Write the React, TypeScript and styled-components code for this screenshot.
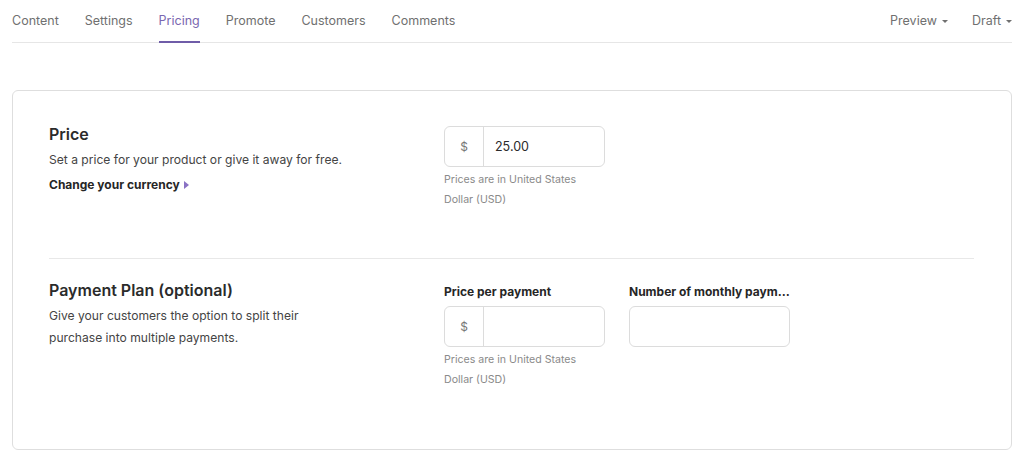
import React from "react"
import styled, { createGlobalStyle } from "styled-components"

const GlobalStyle = createGlobalStyle`
  html, body {
    margin: 0;
    padding: 0;
    background: #fff;
  }
  body {
    font-family: Inter, "Noto Sans", sans-serif;
    color: #2b2b2b;
    -webkit-font-smoothing: antialiased;
  }
  * {
    box-sizing: border-box;
  }
`

const Page = styled.div`
  padding: 0 12px;
`

const Nav = styled.nav`
  display: flex;
  align-items: flex-end;
  height: 43px;
  border-bottom: 1px solid #e6e6e6;
`

const Tabs = styled.div`
  display: flex;
  gap: 26px;
`

interface TabProps {
  $active?: boolean
}

const Tab = styled.a<TabProps>`
  display: flex;
  align-items: center;
  height: 42px;
  padding-bottom: 2px;
  margin-bottom: -1px;
  font-size: 12.5px;
  color: ${({ $active }) => ($active ? "#7a67b0" : "#707070")};
  border-bottom: 2px solid ${({ $active }) => ($active ? "#6f5ca8" : "transparent")};
  cursor: pointer;
`

const NavRight = styled.div`
  display: flex;
  gap: 24px;
  margin-left: auto;
`

const Menu = styled(Tab)`
  gap: 5px;
`

const DownCaret = styled.span`
  display: inline-block;
  width: 0;
  height: 0;
  margin-top: 2px;
  border-left: 3px solid transparent;
  border-right: 3px solid transparent;
  border-top: 3px solid #707070;
`

const Card = styled.section`
  margin-top: 47px;
  border: 1px solid #dedede;
  border-radius: 6px;
  padding: 0 36px 59px;
`

interface SectionProps {
  $top: number
  $bottom: number
}

const Section = styled.div<SectionProps>`
  display: grid;
  grid-template-columns: 371px 161px 161px;
  column-gap: 24px;
  align-items: start;
  padding: ${({ $top, $bottom }) => `${$top}px 0 ${$bottom}px`};
`

const Divider = styled.hr`
  margin: 0 1px 0 0;
  border: 0;
  border-top: 1px solid #e8e8e8;
`

const Intro = styled.div`
  display: flex;
  flex-direction: column;
`

interface TitleProps {
  $offset?: number
}

const Title = styled.h2<TitleProps>`
  margin: ${({ $offset = 0 }) => `${$offset}px 0 0`};
  font-size: 16px;
  line-height: 20px;
  font-weight: 600;
  color: #2b2b2b;
`

const Description = styled.p<{ $wide?: boolean }>`
  margin: 5px 0 0;
  max-width: ${({ $wide }) => ($wide ? "none" : "265px")};
  font-size: 12.1px;
  line-height: 22px;
  color: #444;
`

const CurrencyLink = styled.a`
  display: flex;
  align-items: center;
  gap: 4px;
  margin-top: 3px;
  font-size: 12px;
  line-height: 22px;
  font-weight: 700;
  color: #262626;
  cursor: pointer;
`

const RightCaret = styled.span`
  display: inline-block;
  width: 0;
  height: 0;
  border-top: 4px solid transparent;
  border-bottom: 4px solid transparent;
  border-left: 5px solid #8a72c4;
`

const Field = styled.div`
  display: flex;
  flex-direction: column;
  min-width: 0;
`

const Label = styled.label`
  margin: 2px 0 4px;
  font-size: 12px;
  line-height: 20px;
  font-weight: 700;
  color: #262626;
  white-space: nowrap;
  overflow: hidden;
  text-overflow: ellipsis;
`

const InputGroup = styled.div`
  display: flex;
  height: 41px;
  border: 1px solid #dcdcdc;
  border-radius: 6px;
  overflow: hidden;
`

const Prefix = styled.span`
  display: flex;
  align-items: center;
  justify-content: center;
  width: 39px;
  flex: none;
  border-right: 1px solid #dcdcdc;
  font-size: 12px;
  color: #777;
`

const Input = styled.input`
  flex: 1;
  min-width: 0;
  border: 0;
  outline: none;
  padding: 0 11px;
  font-family: inherit;
  font-size: 12.5px;
  color: #2b2b2b;
  background: transparent;
`

const Help = styled.p`
  margin: 3px 0 0;
  font-size: 10.6px;
  line-height: 20px;
  color: #8a8a8a;
`

const tabs = ["Content", "Settings", "Pricing", "Promote", "Customers", "Comments"]

const MoneyInput: React.FC<{ value?: string }> = ({ value }) => (
  <>
    <InputGroup>
      <Prefix>$</Prefix>
      <Input defaultValue={value} />
    </InputGroup>
    <Help>Prices are in United States Dollar (USD)</Help>
  </>
)

const App = () => (
  <Page>
    <GlobalStyle />
    <Nav>
      <Tabs>
        {tabs.map(t => (
          <Tab key={t} $active={t === "Pricing"}>{t}</Tab>
        ))}
      </Tabs>
      <NavRight>
        <Menu>Preview <DownCaret /></Menu>
        <Menu>Draft <DownCaret /></Menu>
      </NavRight>
    </Nav>

    <Card>
      <Section $top={35} $bottom={48}>
        <Intro>
          <Title $offset={-2}>Price</Title>
          <Description $wide>Set a price for your product or give it away for free.</Description>
          <CurrencyLink>Change your currency <RightCaret /></CurrencyLink>
        </Intro>
        <Field>
          <MoneyInput value="25.00" />
        </Field>
      </Section>
      <Divider />
      <Section $top={21} $bottom={0}>
        <Intro>
          <Title>Payment Plan (optional)</Title>
          <Description>Give your customers the option to split their purchase into multiple payments.</Description>
        </Intro>
        <Field>
          <Label>Price per payment</Label>
          <MoneyInput />
        </Field>
        <Field>
          <Label title="Number of monthly payments">Number of monthly payments</Label>
          <InputGroup>
            <Input />
          </InputGroup>
        </Field>
      </Section>
    </Card>
  </Page>
)

export default App
